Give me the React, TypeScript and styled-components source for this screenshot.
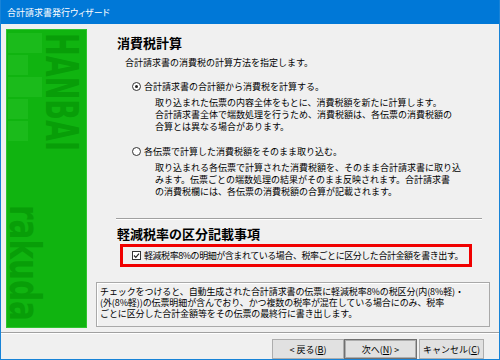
import React from 'react';
import styled, { createGlobalStyle } from 'styled-components';

const GlobalStyle = createGlobalStyle`
  html, body {
    margin: 0;
    padding: 0;
    background: #f0f0f0;
  }
  body {
    font-family: "Noto Sans CJK JP", "Noto Sans", sans-serif;
    color: #000;
  }
`;

const Window = styled.div`
  width: 500px;
  height: 360px;
  box-sizing: border-box;
  display: flex;
  flex-direction: column;
  background: #f0f0f0;
  border: 1px solid #1883d7;
  border-top: none;
  overflow: hidden;
`;

const TitleBar = styled.div`
  height: 24px;
  flex: none;
  display: flex;
  align-items: center;
  padding-left: 7px;
  margin: 0 -1px;
  background: #0078d7;
  color: #fff;
  font-size: 9px;
  font-feature-settings: "palt";
`;

const Body = styled.div`
  flex: 1;
  display: flex;
  padding: 5px 0 4px 5px;
  min-height: 0;
`;

const SidePanel = styled.div`
  width: 81px;
  flex: none;
  background: #10b410;
  box-shadow: inset 0 0 0 1px #2fc42f;
  overflow: hidden;

  svg {
    display: block;
  }

  text {
    fill: #089e08;
    font-family: "DejaVu Sans Condensed", "DejaVu Sans", sans-serif;
    font-weight: bold;
  }
`;

const Content = styled.div`
  flex: 1;
  display: flex;
  flex-direction: column;
  padding: 0 9px;
  min-width: 0;
`;

const Main = styled.div`
  padding-left: 21px;
  display: flex;
  flex-direction: column;
  align-items: flex-start;
`;

const Heading = styled.div<{ $top: number }>`
  margin-top: ${({ $top }) => $top}px;
  font-size: 13px;
  line-height: 16px;
  font-weight: bold;
  white-space: nowrap;
`;

const Lead = styled.div`
  margin: 5px 0 0 8px;
  font-size: 9px;
  line-height: 13px;
  white-space: nowrap;
`;

const OptionRow = styled.div<{ $top: number }>`
  margin: ${({ $top }) => $top}px 0 0 15px;
  display: flex;
  align-items: center;
  gap: 3px;
  font-size: 9px;
  line-height: 13px;
  white-space: nowrap;
`;

const Radio = styled.span<{ $checked?: boolean }>`
  width: 9px;
  height: 9px;
  box-sizing: border-box;
  border: 1px solid #333;
  border-radius: 50%;
  background: #fff;
  display: flex;
  align-items: center;
  justify-content: center;

  &::after {
    content: '';
    width: 3px;
    height: 3px;
    border-radius: 50%;
    background: ${({ $checked }) => ($checked ? '#222' : 'transparent')};
  }
`;

const Note = styled.div`
  margin: 4px 0 0 38px;
  font-size: 9px;
  line-height: 12px;
  white-space: nowrap;
`;

const Rule = styled.div`
  margin: 20px 0 0 -1px;
  width: 366px;
  height: 1px;
  background: #a0a0a0;
  border-bottom: 1px solid #fff;
`;

const Highlight = styled.div`
  margin: 2px 0 0 3px;
  width: 352px;
  height: 23px;
  box-sizing: border-box;
  border: 3px solid #f00000;
  display: flex;
  align-items: center;
  gap: 3px;
  padding-left: 9px;
  font-size: 9px;
  letter-spacing: -0.45px;
  white-space: nowrap;
`;

const Check = styled.span`
  width: 9px;
  height: 9px;
  box-sizing: border-box;
  border: 1px solid #333;
  background: #fff;
  display: flex;

  svg {
    display: block;
  }
`;

const InfoBox = styled.div`
  margin-top: 15px;
  height: 45px;
  box-sizing: border-box;
  border: 1px solid #a9a9a9;
  box-shadow: inset 1px 1px 0 #fff;
  padding: 3px 0 0 3px;
  font-size: 9px;
  line-height: 11px;
  letter-spacing: -0.1px;
  white-space: nowrap;
`;

const Footer = styled.div`
  flex: none;
  border-top: 1px solid #a0a0a0;
  box-shadow: inset 0 1px 0 #fff;
  display: flex;
  justify-content: flex-end;
  padding: 6px 15px 0 0;
  height: 27px;
  box-sizing: border-box;
`;

const Button = styled.button<{ $w: number; $gap?: number; $default?: boolean }>`
  width: ${({ $w }) => $w}px;
  height: 20px;
  margin-left: ${({ $gap }) => $gap ?? 0}px;
  padding: 0;
  box-sizing: border-box;
  background: #e1e1e1;
  border: 1px solid ${({ $default }) => ($default ? '#707070' : '#adadad')};
  box-shadow: ${({ $default }) => ($default ? 'inset 0 0 0 1px #adadad' : 'none')};
  font-family: "Noto Sans CJK JP", "Noto Sans", sans-serif;
  font-size: 9px;
  color: #000;

  u {
    text-decoration-thickness: 1px;
    text-underline-offset: 1px;
  }
`;

const GreenArt = () => (
  <svg width="81" height="297" viewBox="0 0 81 297">
    <g fill="#1bbb1b">
      <rect x="2" y="4" width="34" height="20" />
      <rect x="2" y="26" width="20" height="20" />
      <rect x="2" y="48" width="34" height="20" />
      <rect x="2" y="70" width="20" height="20" />
      <rect x="2" y="92" width="20" height="20" />
    </g>
    <text
      transform="translate(40 4) rotate(90)"
      fontSize="44"
      textLength="118"
      lengthAdjust="spacingAndGlyphs"
    >
      HANBAI
    </text>
    <text
      transform="translate(4 176) rotate(90)"
      fontSize="42"
      textLength="116"
      lengthAdjust="spacingAndGlyphs"
    >
      rakuda
    </text>
  </svg>
);

export default function App() {
  return (
    <>
      <GlobalStyle />
      <Window>
        <TitleBar>合計請求書発行ウィザード</TitleBar>
        <Body>
          <SidePanel>
            <GreenArt />
          </SidePanel>
          <Content>
            <Main>
              <Heading $top={6}>消費税計算</Heading>
              <Lead>合計請求書の消費税の計算方法を指定します。</Lead>
              <OptionRow $top={11}>
                <Radio $checked />
                合計請求書の合計額から消費税を計算する。
              </OptionRow>
              <Note>
                取り込まれた伝票の内容全体をもとに、消費税額を新たに計算します。
                <br />
                合計請求書全体で端数処理を行うため、消費税額は、各伝票の消費税額の
                <br />
                合算とは異なる場合があります。
              </Note>
              <OptionRow $top={12}>
                <Radio />
                各伝票で計算した消費税額をそのまま取り込む。
              </OptionRow>
              <Note>
                取り込まれる各伝票で計算された消費税額を、そのまま合計請求書に取り込
                <br />
                みます。伝票ごとの端数処理の結果がそのまま反映されます。合計請求書
                <br />
                の消費税欄には、各伝票の消費税額の合算が記載されます。
              </Note>
              <Rule />
              <Heading $top={6}>軽減税率の区分記載事項</Heading>
              <Highlight>
                <Check>
                  <svg width="7" height="7" viewBox="0 0 7 7">
                    <path d="M1 3.5 L2.8 5.3 L6 1.6" fill="none" stroke="#222" strokeWidth="1.2" />
                  </svg>
                </Check>
                軽減税率8%の明細が含まれている場合、税率ごとに区分した合計金額を書き出す。
              </Highlight>
            </Main>
            <InfoBox>
              チェックをつけると、自動生成された合計請求書の伝票に軽減税率8%の税区分(内(8%軽)・
              <br />
              (外(8%軽))の伝票明細が含んでおり、かつ複数の税率が混在している場合にのみ、税率
              <br />
              ごとに区分した合計金額等をその伝票の最終行に書き出します。
            </InfoBox>
          </Content>
        </Body>
        <Footer>
          <Button $w={72}>
            &lt; 戻る(<u>B</u>)
          </Button>
          <Button $w={73} $default>
            次へ(<u>N</u>) &gt;
          </Button>
          <Button $w={65} $gap={2}>
            キャンセル(<u>C</u>)
          </Button>
        </Footer>
      </Window>
    </>
  );
}
